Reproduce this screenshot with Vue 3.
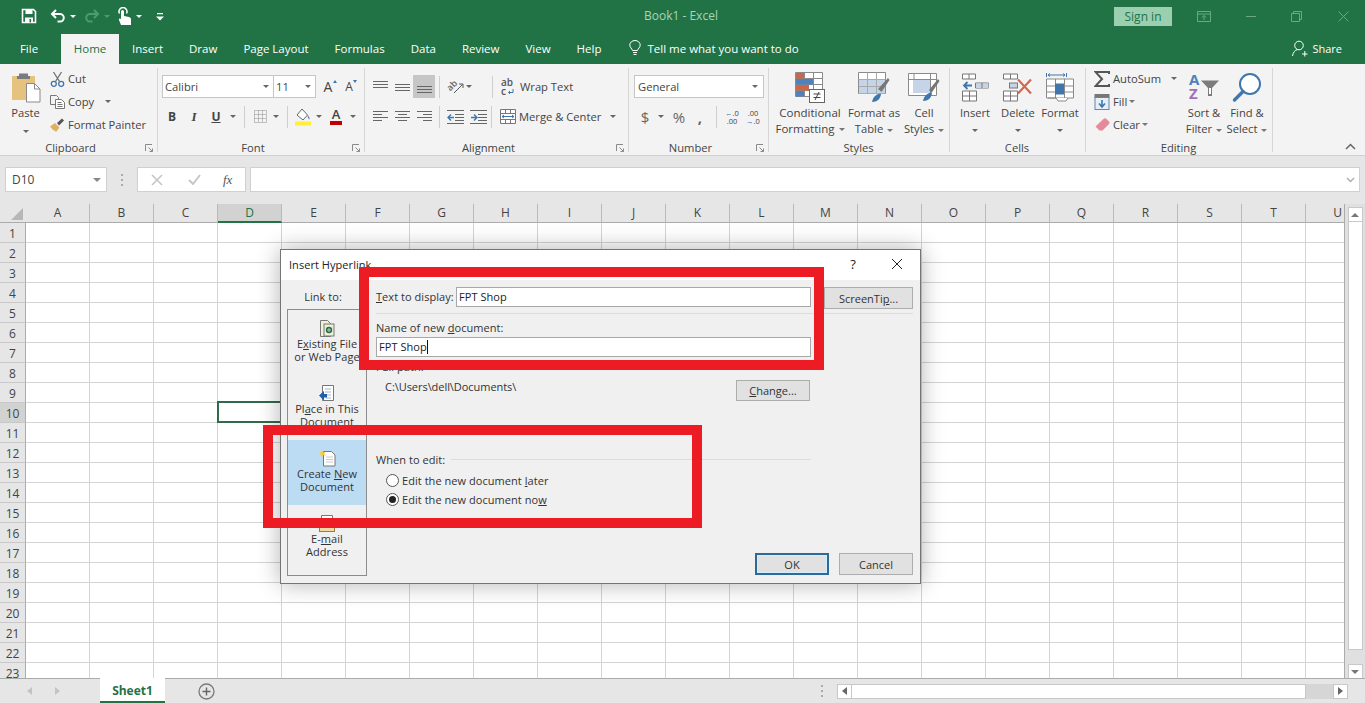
<script setup>
const tabs = ['Insert', 'Draw', 'Page Layout', 'Formulas', 'Data', 'Review', 'View', 'Help']
const cols = 'ABCDEFGHIJKLMNOPQRSTU'.split('')
const rows = Array.from({ length: 23 }, (_, i) => i + 1)
</script>

<template>
  <div class="app">
    <header class="titlebar">
      <div class="qat">
        <svg class="q-save" width="16" height="16" viewBox="0 0 16 16"><path d="M1.500 1.500h11l2 2v11h-13z" fill="none" stroke="#fff" stroke-width="1.600"/><rect x="4.500" y="2" width="7" height="4" fill="#fff"/><rect x="4" y="9.500" width="8" height="5" fill="#fff"/><rect x="8.500" y="11" width="1.600" height="3.400" fill="#217346"/></svg>
        <svg class="q-undo" width="16" height="16" viewBox="0 0 16 16"><path d="M6 2 2 6l4 4M2.500 6H10a3.600 3.600 0 0 1 0 7.600H7.500" fill="none" stroke="#fff" stroke-width="2"/></svg>
        <span class="caret white"></span>
        <svg class="q-redo" width="16" height="16" viewBox="0 0 16 16"><path d="M10 2l4 4-4 4M13.500 6H6a3.600 3.600 0 0 0 0 7.600h2.500" fill="none" stroke="#4f9a70" stroke-width="2"/></svg>
        <span class="caret dim"></span>
        <svg class="q-touch" width="15" height="19" viewBox="0 0 15 19"><path d="M4 18l-2-5c-.5-1.500 1-2.200 2-1V4.500a1.500 1.500 0 0 1 3 0V9l5 1c1.500.4 2 1.200 2 2.500V18z" fill="#fff"/><path d="M2.500 6.500a4 4 0 1 1 7 0" fill="none" stroke="#fff" stroke-width="1.500"/></svg>
        <span class="caret white"></span>
        <svg class="q-more" width="8" height="9" viewBox="0 0 8 9"><path d="M1 1h6v1.200H1zM0 4.500h8L4 8.500z" fill="#fff"/></svg>
      </div>
      <div class="doc-title">Book1  -  Excel</div>
      <div class="signin">Sign in</div>
      <div class="win">
        <svg width="14" height="11" viewBox="0 0 14 11"><path d="M.5.5h13v10H.5zM.5 3h13M7 9V4.500M5 6.500l2-2 2 2" fill="none" stroke="#69a987"/></svg>
        <svg width="12" height="11" viewBox="0 0 12 11"><path d="M1 5.500h10" stroke="#69a987"/></svg>
        <svg width="11" height="11" viewBox="0 0 11 11"><path d="M.5 2.500h8v8h-8zM2.500 2.500v-2h8v8h-2" fill="none" stroke="#69a987"/></svg>
        <svg width="11" height="11" viewBox="0 0 11 11"><path d="M.5.500l10 10M10.500.500l-10 10" stroke="#69a987"/></svg>
      </div>
    </header>

    <nav class="tabbar">
      <span class="tab file">File</span>
      <span class="tab active">Home</span>
      <span v-for="t in tabs" :key="t" class="tab">{{ t }}</span>
      <span class="tell">
        <svg width="12" height="16" viewBox="0 0 12 16"><path d="M3.500 10.500C3 8.500.8 7.500.8 5A5.200 4.500 0 0 1 11.200 5c0 2.500-2.200 3.500-2.700 5.500zM4 12.500h4M4.500 14.500h3" fill="none" stroke="#fff"/></svg>
        Tell me what you want to do
      </span>
      <span class="share">
        <svg width="16" height="17" viewBox="0 0 16 17"><circle cx="7" cy="5.500" r="4.300" fill="none" stroke="#fff"/><path d="M.5 16c.5-3.500 2.500-6 5-6.500M10 14h5.500M12.800 11v5.500" fill="none" stroke="#fff"/></svg>
        Share
      </span>
    </nav>

    <section class="ribbon">
      <div class="group g-clip">
        <div class="body clip-body">
          <div class="paste">
            <svg width="30" height="32" viewBox="0 0 30 32"><rect x="1" y="4" width="23" height="24" fill="#e6c27f"/><path d="M8 4V1.500h9V4h2v3H6V4z" fill="#7b7b7b"/><path d="M15.500 11.500h8l5.500 5.500V30h-13.500z" fill="#fff" stroke="#8a8a8a"/><path d="M23.500 11.500V17H29" fill="none" stroke="#8a8a8a"/></svg>
            <span class="big-label">Paste</span>
            <span class="caret big-caret"></span>
          </div>
          <div class="stack">
            <div class="r"><svg class="si" width="15" height="16" viewBox="0 0 15 16"><path d="M3.500 1l6 9.500M11.500 1l-6 9.500" stroke="#777" stroke-width="1.400"/><circle cx="3.800" cy="12.800" r="2.500" fill="none" stroke="#3f77ad" stroke-width="1.300"/><circle cx="11.200" cy="12.800" r="2.500" fill="none" stroke="#3f77ad" stroke-width="1.300"/></svg><span>Cut</span></div>
            <div class="r"><svg class="si" width="15" height="14" viewBox="0 0 15 14"><path d="M.5.500h6l2 2v2M.5.500v9h4.500" fill="none" stroke="#777"/><path d="M5.500 4.500h6l3 3v6h-9zM7.500 7.500h4M7.500 9.500h5M7.500 11.500h5" fill="#fff" stroke="#777"/></svg><span>Copy</span><span class="caret copy-caret"></span></div>
            <div class="r"><svg class="si" width="15" height="14" viewBox="0 0 15 14"><path d="M0 8.500 5 5l4.500 4.500L6 14c-1-.8-.8-1.500-2-1.500s-2.500-2.500-4-4z" fill="#e0b060"/><path d="M7 5l5-4.500 2 2L9 7.500z" fill="#555"/></svg><span>Format Painter</span></div>
          </div>
        </div>
        <div class="label-row"><span class="glabel">Clipboard</span><svg class="launch" width="8" height="8" viewBox="0 0 8 8"><path d="M.5 7V.5H7M3.500 3.500l4 4M7.500 4.500v3h-3" fill="none" stroke="#8a8a8a"/></svg></div>
      </div>

      <div class="group g-font">
        <div class="body rows2">
          <div class="r">
            <div class="select font-name"><span>Calibri</span><span class="caret"></span></div>
            <div class="select font-size"><span>11</span><span class="caret"></span></div>
            <span class="c22 grow-a">A<i class="up"></i></span>
            <span class="c20 shrink-a">A<i class="down"></i></span>
          </div>
          <div class="r back1">
            <span class="c22 fb">B</span><span class="c22 fi">I</span><span class="c22 fu">U</span><span class="c12"><span class="caret"></span></span>
            <span class="sep ml5"></span>
            <span class="c20"><svg width="15" height="15" viewBox="0 0 15 15"><path d="M1.500 1.500h12v12h-12zM5.500 1.500v12M9.500 1.500v12M1.500 5.500h12M1.500 9.500h12" fill="none" stroke="#8d8d8d" stroke-dasharray="1 1"/></svg></span>
            <span class="c12"><span class="caret"></span></span>
            <span class="sep ml5"></span>
            <span class="c20"><svg width="18" height="18" viewBox="0 0 18 18"><path d="M8 1l5.500 6-4.500 5L3 7z" fill="#fff" stroke="#666"/><path d="M13.500 7c1.500 1.500 2.500 3 2 4.500-1-1-2-2.500-2-4.500z" fill="#3f77ad"/><rect x="1" y="13.500" width="16" height="4" fill="#ffef3b"/></svg></span>
            <span class="c12"><span class="caret"></span></span>
            <span class="c22"><span class="color-a">A</span></span>
            <span class="c12"><span class="caret"></span></span>
          </div>
        </div>
        <div class="label-row"><span class="glabel">Font</span><svg class="launch" width="8" height="8" viewBox="0 0 8 8"><path d="M.5 7V.5H7M3.500 3.500l4 4M7.500 4.500v3h-3" fill="none" stroke="#8a8a8a"/></svg></div>
      </div>

      <div class="group g-align">
        <div class="body rows2">
          <div class="r">
            <span class="c22"><svg width="15" height="14" viewBox="0 0 15 14"><path d="M0 1.500h15M0 4.500h15M0 7.500h15" stroke="#666"/></svg></span>
            <span class="c22"><svg width="15" height="14" viewBox="0 0 15 14"><path d="M0 4.500h15M0 7.500h15M0 10.500h15" stroke="#666"/></svg></span>
            <span class="c22 on"><svg width="15" height="14" viewBox="0 0 15 14"><path d="M0 6.500h15M0 9.500h15M0 12.500h15" stroke="#666"/></svg></span>
            <span class="sep ml4"></span>
            <span class="c20"><svg class="orient" width="17" height="15" viewBox="0 0 17 15"><text x="1" y="11" transform="rotate(-45 4 9)" class="tiny">ab</text><path d="M7 14 15.500 5.500M12 5h4v4" fill="none" stroke="#555"/></svg></span>
            <span class="c8"><span class="caret"></span></span>
            <span class="sep ml19"></span>
            <span class="wrap-ic"><span class="w1">ab</span><span class="w2">c<svg width="7" height="7" viewBox="0 0 7 7"><path d="M6 1v3.500H1.500M3 3 1.500 4.500 3 6" fill="none" stroke="#3f77ad"/></svg></span></span>
            <span class="txt2">Wrap Text</span>
          </div>
          <div class="r">
            <span class="c22"><svg width="15" height="13" viewBox="0 0 15 13"><path d="M0 1.500h15M0 4.500h9M0 7.500h15M0 10.500h9" stroke="#666"/></svg></span>
            <span class="c22"><svg width="15" height="13" viewBox="0 0 15 13"><path d="M0 1.500h15M3 4.500h9M0 7.500h15M3 10.500h9" stroke="#666"/></svg></span>
            <span class="c22"><svg width="15" height="13" viewBox="0 0 15 13"><path d="M0 1.500h15M6 4.500h9M0 7.500h15M6 10.500h9" stroke="#666"/></svg></span>
            <span class="sep ml4"></span>
            <span class="c20"><svg width="17" height="14" viewBox="0 0 17 14"><path d="M0 .500h17M8 4.500h9M8 7.500h9M8 10.500h9M0 13.500h17" stroke="#666"/><path d="M1 7.500h6M4 4.500l-3 3 3 3" fill="none" stroke="#3f77ad" stroke-width="1.400"/></svg></span>
            <span class="c22 ml2"><svg width="17" height="14" viewBox="0 0 17 14"><path d="M0 .500h17M8 4.500h9M8 7.500h9M8 10.500h9M0 13.500h17" stroke="#666"/><path d="M1 7.500h6M4 4.500l3 3-3 3" fill="none" stroke="#3f77ad" stroke-width="1.400"/></svg></span>
            <span class="sep ml2"></span>
            <svg class="merge-ic" width="16" height="15" viewBox="0 0 16 15"><path d="M.5.500h15v14H.5zM.5 4.500h15M.5 10.500h15M5.500.500v4M10.500.500v4M5.500 10.500v4M10.500 10.500v4" fill="#fff" stroke="#777"/><path d="M2 7.500h12M4 6 2 7.500 4 9M12 6l2 1.500L12 9" fill="none" stroke="#3f77ad"/></svg>
            <span class="txt2">Merge &amp; Center</span>
            <span class="caret merge-caret"></span>
          </div>
        </div>
        <div class="label-row"><span class="glabel">Alignment</span><svg class="launch" width="8" height="8" viewBox="0 0 8 8"><path d="M.5 7V.5H7M3.500 3.500l4 4M7.500 4.500v3h-3" fill="none" stroke="#8a8a8a"/></svg></div>
      </div>

      <div class="group g-num">
        <div class="body rows2">
          <div class="r"><div class="select num-sel"><span>General</span><span class="caret"></span></div></div>
          <div class="r">
            <span class="c22 num-sym">$</span><span class="c10"><span class="caret"></span></span>
            <span class="c26 num-sym">%</span><span class="c16 num-sym comma">,</span>
            <span class="sep ml8"></span>
            <span class="c20 dec"><i class="arr">&#8592;</i>.0<br>.00</span>
            <span class="c22 dec">.00<br><i class="arr">&#8594;</i>.0</span>
          </div>
        </div>
        <div class="label-row"><span class="glabel">Number</span><svg class="launch" width="8" height="8" viewBox="0 0 8 8"><path d="M.5 7V.5H7M3.500 3.500l4 4M7.500 4.500v3h-3" fill="none" stroke="#8a8a8a"/></svg></div>
      </div>

      <div class="group g-styles">
        <div class="body bigs">
          <div class="big w78">
            <svg class="bi" width="30" height="31" viewBox="0 0 30 31"><path d="M.5.500h27v24H.5zM9.500.5v24M18.500.5v24M.5 6.500h27M.5 12.500h27M.5 18.500h27" fill="#fff" stroke="#8a8a8a"/><rect x="1" y="1" width="8" height="5.500" fill="#c9674a"/><rect x="1" y="7" width="17" height="5.500" fill="#4f81bd"/><rect x="1" y="13" width="13" height="5.500" fill="#c9674a"/><rect x="1" y="19" width="8" height="5.500" fill="#4f81bd"/><rect x="14.500" y="17.500" width="15" height="13" fill="#fff" stroke="#666"/><path d="M18.500 22h7M18.500 25.500h7M24 20l-4 8" fill="none" stroke="#444"/></svg>
            <span class="ln">Conditional</span><span class="ln">Formatting<span class="caret in"></span></span>
          </div>
          <div class="big w50">
            <svg class="bi" width="32" height="31" viewBox="0 0 32 31"><path d="M.5.500h27v21H.5zM9.500.5v21M18.500.5v21M.5 7.500h27M.5 14.500h27" fill="#fff" stroke="#8a8a8a"/><rect x="1" y="8" width="26" height="13.500" fill="#c5d4e6"/><path d="M.5 7.500h27M.5 14.500h27M9.500.5v21M18.500.5v21" stroke="#a9a9a9"/><path d="M20 17 30 6l1.500 2-8 12z" fill="#777"/><path d="M14 30c1-5 5-9 9-8-.5 5-4 8-9 8z" fill="#3f77ad"/></svg>
            <span class="ln">Format as</span><span class="ln">Table<span class="caret in"></span></span>
          </div>
          <div class="big w50">
            <svg class="bi" width="32" height="29" viewBox="0 0 32 29"><path d="M.5.500h28v22H.5zM.5 6.500h28M6 .500v6M22.500.500v22" fill="#fff" stroke="#8a8a8a"/><rect x="5" y="7" width="17" height="13" fill="#c5d4e6"/><path d="M21 17 30 6l1.500 2-8 12z" fill="#777"/><path d="M15 28c1-5 5-9 9-8-.5 5-4 8-9 8z" fill="#3f77ad"/></svg>
            <span class="ln">Cell</span><span class="ln">Styles<span class="caret in"></span></span>
          </div>
        </div>
        <div class="label-row plain"><span class="glabel">Styles</span></div>
      </div>

      <div class="group g-cells">
        <div class="body bigs">
          <div class="big w44">
            <svg class="bi" width="28" height="28" viewBox="0 0 28 28"><path d="M1.500.500h13v5h-13zM8 .500v5M1.500 17.500h14v10h-14zM8.500 17.500v10M1.500 22.500h14M14.500 9.500h13v5h-13zM21 9.500v5" fill="#fff" stroke="#777"/><rect x="15" y="10" width="12.500" height="4.500" fill="#c5d4e6"/><path d="M21 9.500v5" stroke="#777"/><path d="M3 12h8M6.500 8.500 3 12l3.500 3.500" fill="none" stroke="#3f77ad" stroke-width="1.800"/></svg>
            <span class="ln">Insert</span><span class="caret low"></span>
          </div>
          <div class="big w42">
            <svg class="bi" width="30" height="28" viewBox="0 0 30 28"><path d="M.5.500h14v5H.5zM7.500.500v5M.5 17.500h14v10H.5zM7.500 17.500v10M.5 22.500h14" fill="#fff" stroke="#777"/><rect x="6.500" y="9.500" width="8" height="5" fill="#c5d4e6" stroke="#777"/><path d="M15 6l13 14M28 6 15 20" stroke="#d2694d" stroke-width="2.200"/></svg>
            <span class="ln">Delete</span><span class="caret low"></span>
          </div>
          <div class="big w42">
            <svg class="bi" width="28" height="30" viewBox="0 0 28 30"><path d="M.5 6.500h27v19H.5zM9.500 6.500v19M18.500 6.500v19M.5 13.500h27M.5 19.500h27" fill="#fff" stroke="#8a8a8a"/><rect x="9" y="11" width="9" height="11" fill="#3f77ad"/><path d="M.5.500v4M20.500.500v4M2 2.500h17M4 1 2 2.500 4 4M17 1l2 1.500L17 4" fill="none" stroke="#3f77ad"/><path d="M2 25.500h8l2 3h8l2-3" fill="#fff" stroke="#8a8a8a"/></svg>
            <span class="ln">Format</span><span class="caret low"></span>
          </div>
        </div>
        <div class="label-row plain"><span class="glabel">Cells</span></div>
      </div>

      <div class="group g-edit">
        <div class="body bigs">
          <div class="stack edit-stack">
            <div class="r"><svg class="sum" width="16" height="16" viewBox="0 0 16 16"><path d="M15 3V1H1.500L8 8l-6.500 7H15v-2" fill="none" stroke="#555" stroke-width="2"/></svg><span>AutoSum</span><span class="caret sum-caret"></span></div>
            <div class="r"><svg class="sum" width="15" height="16" viewBox="0 0 15 16"><rect x="0" y="0" width="15" height="4" fill="#777"/><rect x=".5" y="3.500" width="14" height="12" fill="#e6eef7" stroke="#5d87b4"/><path d="M7.500 6v7M4.500 9.500l3 3.500 3-3.500" fill="none" stroke="#3f77ad" stroke-width="1.600"/></svg><span>Fill</span><span class="caret in near"></span></div>
            <div class="r"><svg class="sum" width="15" height="13" viewBox="0 0 15 13"><path d="M5 12.500 1 8.500 9 1c1-1 2-1 3 0l2.500 2.500c.7.800.7 1.500 0 2.500L8 12.500z" fill="#e58a9a"/></svg><span>Clear</span><span class="caret in near"></span></div>
          </div>
          <div class="big w44">
            <div class="sort-ic">
              <span class="az"><span class="az-a">A</span><span class="az-z">Z</span></span>
              <svg width="18" height="17" viewBox="0 0 18 17"><path d="M0 .5h18l-7 7.500v8H7V8z" fill="#7c7c7c"/><path d="M8 8v6h2V8z" fill="#fff"/></svg>
            </div>
            <span class="ln">Sort &amp;</span><span class="ln">Filter<span class="caret in"></span></span>
          </div>
          <div class="big w42">
            <svg class="bi" width="30" height="31" viewBox="0 0 30 31"><circle cx="18" cy="12" r="10" fill="#fff" stroke="#3f77ad" stroke-width="2"/><path d="M11 19.500 2.500 28" stroke="#3f77ad" stroke-width="3.400" stroke-linecap="round"/></svg>
            <span class="ln">Find &amp;</span><span class="ln">Select<span class="caret in"></span></span>
          </div>
        </div>
        <div class="label-row plain"><span class="glabel">Editing</span></div>
      </div>

      <div class="ribbon-end">
        <svg width="11" height="7" viewBox="0 0 11 7"><path d="M1 6l4.500-4.500L10 6" fill="none" stroke="#666" stroke-width="1.500"/></svg>
      </div>
    </section>

    <section class="formula">
      <div class="namebox"><span>D10</span><span class="caret"></span></div>
      <div class="fdots"><i></i><i></i><i></i></div>
      <div class="fxbox">
        <svg width="12" height="12" viewBox="0 0 12 12"><path d="M1 1l10 10M11 1 1 11" stroke="#c4c4c4" stroke-width="1.500"/></svg>
        <svg width="13" height="11" viewBox="0 0 13 11"><path d="M1 6l4 4 7-9" fill="none" stroke="#c4c4c4" stroke-width="1.800"/></svg>
        <span class="fx">fx</span>
      </div>
      <div class="finput">
        <svg width="9" height="6" viewBox="0 0 9 6"><path d="M1 1l3.500 3.500L8 1" fill="none" stroke="#b0b0b0" stroke-width="1.500"/></svg>
      </div>
    </section>

    <section class="sheet">
      <div class="grid">
        <div class="grow head-row">
          <div class="corner"><i></i></div>
          <div v-for="c in cols" :key="c" class="chead" :class="{ sel: c === 'D' }">{{ c }}</div>
        </div>
        <div v-for="r in rows" :key="r" class="grow">
          <div class="rhead" :class="{ sel: r === 10 }">{{ r }}</div>
          <div v-for="c in cols" :key="c" class="cell" :class="{ current: r === 10 && c === 'D' }"></div>
        </div>
      </div>
      <div class="vscroll">
        <div class="sbtn"><i class="tri-up"></i></div>
        <div class="vthumb"></div>
        <div class="sbtn"><i class="tri-down"></i></div>
      </div>
    </section>

    <footer class="statusbar">
      <div class="nav"><i class="tri-left dim"></i><i class="tri-right dim"></i></div>
      <div class="sheet-tab">Sheet1</div>
      <svg class="plus" width="17" height="17" viewBox="0 0 17 17"><circle cx="8.500" cy="8.500" r="7.500" fill="none" stroke="#7a7a7a" stroke-width="1.300"/><path d="M8.500 4.500v8M4.500 8.500h8" stroke="#666" stroke-width="1.400"/></svg>
      <div class="sdots"><i></i><i></i><i></i></div>
      <div class="hscroll">
        <div class="hbtn"><i class="tri-left"></i></div>
        <div class="hthumb"></div>
        <div class="hbtn"><i class="tri-right"></i></div>
      </div>
    </footer>

    <div class="dialog">
      <div class="dlg-title">
        <span class="dlg-name">Insert Hyperlink</span>
        <span class="help">?</span>
        <svg class="close" width="12" height="12" viewBox="0 0 12 12"><path d="M1 1l10 10M11 1 1 11" stroke="#222"/></svg>
      </div>
      <div class="dlg-body">
        <div class="linkcol">
          <div class="linkto">Link to:</div>
          <div class="panel">
            <div class="pitem">
              <svg class="pi" width="16" height="17" viewBox="0 0 16 17"><path d="M1.500.500h7l3 3v13h-10z" fill="#f5efd7" stroke="#777"/><rect x="5" y="4" width="10" height="12" fill="#e9f0d6" stroke="#777"/><circle cx="10" cy="10" r="3.200" fill="#2d6a4f"/><path d="M8 10h4M10 8v4" stroke="#cfe2c4" stroke-width=".8"/></svg>
              <span>E<u>x</u>isting File</span><span>or Web Page</span>
            </div>
            <div class="pitem">
              <svg class="pi" width="16" height="17" viewBox="0 0 16 17"><path d="M3.500.500h11v15h-11z" fill="#fff" stroke="#777"/><path d="M6 4h6M6 7h6M7 10h5M7 13h5" stroke="#9bb5cf"/><path d="M0 10.500 5 6v3h3v3.500H5v3z" fill="#1f5fa8"/></svg>
              <span>Pl<u>a</u>ce in This</span><span>Document</span>
            </div>
            <div class="pitem current">
              <svg class="pi" width="17" height="17" viewBox="0 0 17 17"><path d="M4.500 1.500h8l3.500 3.500v11H4.500z" fill="#fff" stroke="#777"/><path d="M7 7h7M7 9.500h7M7 12h7" stroke="#c9c9c9"/><path d="M3.500 0l.8 2.500 2.500-.8-1.600 2 1.600 2-2.500-.8-.8 2.500-.8-2.500-2.500.8 1.600-2-1.600-2 2.500.8z" fill="#f2c94c"/></svg>
              <span>Create <u>N</u>ew</span><span>Document</span>
            </div>
            <div class="pitem">
              <svg class="pi" width="16" height="17" viewBox="0 0 16 17"><path d="M2.500.500h11v14h-11z" fill="#fff" stroke="#777"/><rect x=".5" y="9.500" width="15" height="7" fill="#f0d9a8" stroke="#a07c3c"/></svg>
              <span>E-<u>m</u>ail</span><span>Address</span>
            </div>
          </div>
        </div>
        <div class="formcol">
          <div class="display-row">
            <label class="lb"><u>T</u>ext to display:</label>
            <div class="input display-input">FPT Shop</div>
            <button class="btn tip">ScreenTi<u>p</u>...</button>
          </div>
          <div class="rule"></div>
          <div class="lb name-lb">Name of new <u>d</u>ocument:</div>
          <div class="input name-input">FPT Shop<i class="cursor"></i></div>
          <div class="lb full-lb">Full path:</div>
          <div class="path-row">
            <span class="path">C:\Users\dell\Documents\</span>
            <button class="btn change"><u>C</u>hange...</button>
          </div>
          <div class="when"><span class="lb">When to edit:</span><i></i></div>
          <div class="radios">
            <div class="radio"><i class="rd"></i><span>Edit the new document <u>l</u>ater</span></div>
            <div class="radio"><i class="rd checked"></i><span>Edit the new document no<u>w</u></span></div>
          </div>
          <div class="actions">
            <button class="btn act ok">OK</button>
            <button class="btn act">Cancel</button>
          </div>
        </div>
      </div>
    </div>

    <div class="mark mark-a"></div>
    <div class="mark mark-b"></div>
  </div>
</template>

<style>
html, body { margin: 0; padding: 0; overflow: hidden; }
</style>

<style scoped>
.app { position: relative; width: 1365px; height: 703px; overflow: hidden; display: flex; flex-direction: column; font-family: "Open Sans", "Noto Sans", sans-serif; font-size: 11.2px; color: #444; background: #fff; }
i { font-style: normal; display: block; }
svg { display: block; flex: none; }

.caret { display: inline-block; width: 0; height: 0; border-left: 3px solid transparent; border-right: 3px solid transparent; border-top: 3px solid #666; flex: none; }
.caret.white { border-top-color: #fff; }
.caret.dim { border-top-color: #4f9a70; }
.caret.in { margin-left: 4px; vertical-align: middle; border-top-color: #777; }
.caret.in.near { margin-left: 2px; }
.caret.low { margin-top: 8px; }

.titlebar { height: 32px; background: #217346; display: flex; align-items: center; flex: none; position: relative; }
.qat { display: flex; align-items: center; width: 1114px; padding-left: 21px; box-sizing: border-box; }
.q-undo { margin-left: 13px; }
.qat .caret { margin-left: 4px; }
.q-redo { margin-left: 8px; }
.q-touch { margin-left: 7px; }
.q-more { margin-left: 14px; }
.doc-title { position: absolute; left: 644px; top: 7px; font-size: 12px; color: #a6d5b9; white-space: pre; }
.signin { width: 58px; height: 19px; line-height: 19px; background: #9bcfb0; color: #217346; text-align: center; font-size: 12px; }
.win { display: flex; align-items: center; margin-left: 25px; gap: 0; }
.win svg:nth-child(2) { margin-left: 34px; }
.win svg:nth-child(3) { margin-left: 34px; }
.win svg:nth-child(4) { margin-left: 36px; }

.tabbar { height: 32px; background: #217346; display: flex; align-items: stretch; flex: none; color: #fff; font-size: 11.5px; position: relative; }
.tab { display: flex; align-items: center; justify-content: center; padding: 0 13px 2px; margin-top: 2px; white-space: nowrap; }
.tab.file { width: 61px; padding: 0 3px 2px 0; box-sizing: border-box; }
.tab.active { width: 58px; padding: 0 0 2px; background: #f3f3f3; color: #217346; }
.tell { display: flex; align-items: center; gap: 6px; margin-left: 15px; padding-bottom: 2px; margin-top: 2px; white-space: nowrap; }
.share { display: flex; align-items: center; gap: 4px; margin-left: auto; margin-right: 23px; padding-bottom: 2px; margin-top: 2px; font-size: 11px; }

.ribbon { height: 92px; flex: none; background: #f3f3f3; border-bottom: 1px solid #cfcfcf; box-sizing: border-box; display: flex; }
.group { display: flex; flex-direction: column; box-sizing: border-box; position: relative; flex: none; }
.group::after { content: ""; position: absolute; right: 0; top: 4px; bottom: 3px; width: 1px; background: #d6d6d6; }
.g-clip { width: 158px; }
.g-font { width: 207px; }
.g-align { width: 264px; }
.g-num { width: 140px; }
.g-styles { width: 181px; }
.g-cells { width: 136px; }
.g-edit { width: 187px; }
.ribbon-end { flex: 1; display: flex; justify-content: flex-end; align-items: flex-end; padding: 0 9px 5px 0; }
.body { height: 76px; box-sizing: border-box; flex: none; }
.label-row { display: flex; align-items: center; height: 15px; padding-right: 4px; }
.glabel { flex: 1; text-align: center; font-size: 11.2px; color: #444; line-height: 15px; padding-right: 4px; }
.label-row.plain { padding-right: 0; }
.plain .glabel { padding-right: 2px; }
.launch { margin: 1px 1px 0 0; width: 8px; }

.clip-body { display: flex; padding: 3px 0 0 3px; }
.paste { width: 45px; display: flex; flex-direction: column; align-items: center; padding-top: 5px; }
.big-label { margin-top: 1px; line-height: 16px; }
.big-caret { margin-top: 9px; }
.stack { display: flex; flex-direction: column; }
.r { height: 23px; display: flex; align-items: center; white-space: nowrap; flex: none; }
.si { margin: 0 3px 0 2px; width: 15px; }
.copy-caret { margin-left: 11px; }

.rows2 { padding: 11px 0 0 4px; display: flex; flex-direction: column; gap: 7px; }
.back1 { margin-left: -1px; }
.select { height: 23px; box-sizing: border-box; background: #fff; border: 1px solid #c6c6c6; display: flex; align-items: center; justify-content: space-between; padding: 0 4px 0 2px; }
.font-name { width: 112px; }
.font-size { width: 43px; margin-left: -1px; }
.c8, .c10, .c12, .c16, .c20, .c22, .c26 { display: flex; align-items: center; justify-content: center; height: 23px; flex: none; position: relative; }
.c8 { width: 8px; } .c10 { width: 10px; } .c12 { width: 12px; } .c16 { width: 16px; }
.c20 { width: 20px; } .c22 { width: 22px; } .c26 { width: 26px; }
.on { background: #c6c6c6; }
.grow-a { font-size: 14px; margin-left: 1px; }
.shrink-a { font-size: 12px; }
.grow-a .up, .shrink-a .down { position: absolute; width: 0; height: 0; border-left: 2.5px solid transparent; border-right: 2.5px solid transparent; top: 5px; right: 2px; }
.up { border-bottom: 3px solid #3f77ad; }
.down { border-top: 3px solid #3f77ad; }
.fb { font-weight: 700; font-size: 12px; }
.fi { font-style: italic; font-family: "Liberation Serif", serif; font-size: 13px; font-weight: 700; }
.fu { text-decoration: underline; font-weight: 700; font-size: 12px; }
.sep { width: 1px; height: 22px; background: #cfcfcf; flex: none; margin-right: 5px; }
.ml2 { margin-left: 2px; }
.ml4 { margin-left: 4px; }
.ml5 { margin-left: 5px; }
.ml8 { margin-left: 8px; }
.ml19 { margin-left: 19px; }
.color-a { display: block; font-size: 13px; line-height: 13px; border-bottom: 4px solid #c00000; padding: 0 2px; font-weight: 600; }
.orient { overflow: visible; }
.tiny { font-size: 9px; fill: #666; font-weight: 600; }
.wrap-ic { display: flex; flex-direction: column; width: 16px; margin-left: 3px; font-size: 10px; line-height: 9px; color: #555; font-weight: 600; flex: none; }
.w1, .w2 { display: flex; align-items: center; height: 9px; }
.w2 svg { margin-left: 1px; }
.merge-ic { margin-left: 3px; }
.txt2 { margin-left: 3px; }
.merge-caret { margin-left: 9px; }

.g-num .rows2 { padding-left: 5px; }
.num-sel { width: 130px; padding-right: 5px; padding-left: 3px; }
.num-sym { font-size: 15px; color: #666; }
.comma { font-weight: 700; }
.dec { font-size: 7.5px; line-height: 8px; text-align: center; display: block; padding-top: 4px; box-sizing: border-box; }
.arr { display: inline; color: #3f77ad; font-weight: 700; }

.bigs { display: flex; padding: 6px 0 0 2px; }
.big { display: flex; flex-direction: column; align-items: center; white-space: nowrap; flex: none; }
.bi { height: 35px; margin-bottom: 0; }
.ln { line-height: 16px; display: block; }
.w78 .ln { font-size: 11.5px; }
.w78 { width: 78px; } .w50 { width: 50px; } .w44 { width: 44px; } .w42 { width: 42px; }
.g-cells .bigs { padding-left: 3px; }
.g-edit .bigs { padding-left: 8px; padding-top: 0; }
.g-edit .big { padding-top: 6px; }
.edit-stack { width: 88px; padding-top: 3px; flex: none; }
.sum { margin-right: 3px; width: 16px; }
.sum-caret { margin-left: 10px; }
.sort-ic { display: flex; width: 30px; height: 35px; flex: none; }
.az { display: flex; flex-direction: column; width: 12px; font-size: 15px; line-height: 14px; font-weight: 700; flex: none; padding-top: 2px; }
.az-a { color: #4f81bd; }
.az-z { color: #a26fb5; }
.sort-ic svg { margin-top: 10px; }

.formula { height: 48px; flex: none; background: #e6e6e6; display: flex; padding: 11px 5px 12px 5px; box-sizing: border-box; font-size: 12px; }
.namebox { width: 102px; height: 25px; box-sizing: border-box; background: #fff; border: 1px solid #d0d0d0; display: flex; align-items: center; justify-content: space-between; padding: 0 5px 0 6px; }
.namebox .caret { border-left-width: 4px; border-right-width: 4px; border-top-width: 4px; border-top-color: #888; }
.fdots { width: 30px; display: flex; flex-direction: column; align-items: center; justify-content: center; gap: 3px; }
.fdots i, .sdots i { width: 2px; height: 2px; background: #aaa; }
.fxbox { width: 109px; height: 25px; box-sizing: border-box; background: #fff; border: 1px solid #d0d0d0; display: flex; align-items: center; gap: 25px; padding-left: 13px; }
.fx { font-family: "Liberation Serif", serif; font-style: italic; font-size: 13px; color: #555; margin-left: -3px; }
.finput { flex: 1; height: 25px; margin-left: 4px; box-sizing: border-box; background: #fff; border: 1px solid #d0d0d0; display: flex; align-items: center; justify-content: flex-end; padding-right: 4px; }

.sheet { flex: 1; min-height: 0; display: flex; overflow: hidden; background: #e6e6e6; }
.grid { width: 1345px; overflow: hidden; flex: none; border-right: 1px solid #ababab; box-sizing: border-box; background: #fff; }
.grow { display: flex; height: 20px; }
.head-row { height: 19px; background: #e6e6e6; }
.corner { width: 26px; flex: none; position: relative; border-bottom: 1px solid #ababab; box-sizing: border-box; }
.corner i { position: absolute; right: 3px; bottom: 2px; width: 0; height: 0; border-left: 12px solid transparent; border-bottom: 12px solid #b7b7b7; }
.chead { width: 64px; flex: none; box-sizing: border-box; text-align: center; border-right: 1px solid #b9b9b9; border-bottom: 1px solid #ababab; line-height: 18px; font-size: 12px; color: #444; }
.chead.sel { background: #d2d2d2; color: #217346; border-bottom: 2px solid #217346; }
.rhead { width: 26px; flex: none; box-sizing: border-box; background: #e6e6e6; border-right: 1px solid #ababab; border-bottom: 1px solid #c8c8c8; text-align: center; line-height: 21px; font-size: 12px; color: #444; }
.rhead.sel { background: #d2d2d2; color: #444; border-right: 1px solid #ababab; }
.cell { width: 64px; flex: none; box-sizing: border-box; border-right: 1px solid #d4d4d4; border-bottom: 1px solid #d4d4d4; position: relative; }
.cell.current::after { content: ""; position: absolute; left: -1px; top: -2px; right: -1px; bottom: -1px; border: 2px solid #2f6b4a; }

.vscroll { width: 20px; flex: none; display: flex; flex-direction: column; align-items: center; padding: 3px 0 2px; box-sizing: border-box; background: #e0e0e0; }
.sbtn { width: 15px; height: 15px; background: #fff; border: 1px solid #c8c8c8; box-sizing: border-box; display: flex; align-items: center; justify-content: center; flex: none; }
.vthumb { width: 15px; height: 428px; box-sizing: border-box; background: #fff; border: 1px solid #c8c8c8; border-top: 0; margin-bottom: 14px; flex: none; }
.tri-up { width: 0; height: 0; border-left: 4px solid transparent; border-right: 4px solid transparent; border-bottom: 4px solid #777; }
.tri-down { width: 0; height: 0; border-left: 4px solid transparent; border-right: 4px solid transparent; border-top: 4px solid #777; }
.tri-left { width: 0; height: 0; border-top: 4px solid transparent; border-bottom: 4px solid transparent; border-right: 5px solid #666; }
.tri-right { width: 0; height: 0; border-top: 4px solid transparent; border-bottom: 4px solid transparent; border-left: 5px solid #666; }

.statusbar { height: 25px; flex: none; background: #e6e6e6; border-top: 1px solid #ababab; box-sizing: border-box; display: flex; align-items: center; }
.nav { width: 100px; display: flex; gap: 23px; padding-left: 27px; box-sizing: border-box; flex: none; }
.nav .dim { border-right-color: #c3c3c3; border-left-color: #c3c3c3; }
.sheet-tab { width: 65px; height: 25px; margin-top: -1px; background: #fff; color: #217346; font-weight: 700; font-size: 12px; line-height: 25px; text-align: center; border-bottom: 2px solid #217346; box-sizing: border-box; flex: none; }
.plus { margin-left: 33px; }
.sdots { margin-left: 606px; display: flex; flex-direction: column; gap: 3px; width: 2px; flex: none; }
.hscroll { margin-left: 14px; width: 511px; height: 15px; display: flex; background: #d6d6d6; flex: none; }
.hbtn { width: 15px; height: 15px; background: #fff; border: 1px solid #c8c8c8; box-sizing: border-box; display: flex; align-items: center; justify-content: center; flex: none; }
.hthumb { width: 454px; background: #fff; border: 1px solid #c8c8c8; border-left: 0; box-sizing: border-box; margin-right: 27px; flex: none; }

.dialog { position: absolute; left: 280px; top: 249px; width: 641px; height: 335px; box-sizing: border-box; border: 1px solid #757575; background: #f0f0f0; box-shadow: 0 0 22px rgba(0, 0, 0, .3); display: flex; flex-direction: column; color: #333; font-size: 11px; letter-spacing: .05px; }
.dlg-title { height: 30px; background: #fff; display: flex; align-items: center; flex: none; padding-left: 8px; padding-bottom: 2px; box-sizing: border-box; }
.dlg-name { font-size: 11px; flex: 1; color: #222; }
.help { font-size: 13px; margin-right: 35px; color: #222; }
.close { margin-right: 17px; }
.dlg-body { flex: 1; display: flex; min-height: 0; }
.linkcol { width: 86px; flex: none; padding-left: 6px; box-sizing: border-box; }
.linkto { height: 29px; line-height: 34px; text-align: center; padding-right: 8px; }
.panel { width: 80px; height: 267px; box-sizing: border-box; border: 1px solid #8c8c8c; background: #f0f0f0; }
.pitem { height: 65px; display: flex; flex-direction: column; align-items: center; box-sizing: border-box; padding-top: 10px; line-height: 13px; white-space: nowrap; color: #333; }
.pitem.current { background: #bcdcf4; }
.pi { height: 17px; margin-bottom: 0; }
.formcol { flex: 1; min-width: 0; display: flex; flex-direction: column; padding: 7px 7px 8px 9px; box-sizing: border-box; }
.display-row { display: flex; height: 22px; flex: none; }
.lb { white-space: nowrap; }
.display-row .lb { width: 80px; line-height: 20px; flex: none; }
.input { height: 20px; box-sizing: border-box; background: #fff; border: 1px solid #a8a8a8; line-height: 18px; padding-left: 2px; flex: none; display: flex; align-items: center; color: #222; }
.display-input { width: 355px; }
.name-input { width: 435px; margin-top: 2px; }
.cursor { width: 1px; height: 14px; background: #111; }
.btn { font: inherit; color: #333; letter-spacing: 0; background: #e1e1e1; border: 1px solid #adadad; box-sizing: border-box; padding: 0; display: flex; align-items: center; justify-content: center; flex: none; }
.tip { width: 89px; height: 22px; margin-left: 13px; }
.rule { height: 1px; background: #dcdcdc; margin-top: 4px; flex: none; }
.name-lb { height: 14px; line-height: 14px; margin-top: 7px; flex: none; }
.full-lb { height: 14px; line-height: 14px; margin-top: 3px; flex: none; }
.path-row { display: flex; justify-content: space-between; align-items: flex-start; width: 434px; height: 21px; margin-top: 6px; padding-left: 9px; box-sizing: border-box; flex: none; }
.path { line-height: 14px; letter-spacing: -.05px; }
.change { width: 74px; height: 21px; }
.when { display: flex; align-items: center; width: 435px; height: 14px; margin-top: 51px; flex: none; }
.when i { flex: 1; height: 1px; background: #dcdcdc; margin-left: 6px; }
.radios { margin-top: 5px; padding-left: 10px; flex: none; }
.radio { display: flex; align-items: center; height: 19px; gap: 3px; white-space: nowrap; }
.rd { width: 13px; height: 13px; box-sizing: border-box; border-radius: 50%; background: #fff; border: 1px solid #555; position: relative; flex: none; }
.rd.checked::after { content: ""; position: absolute; inset: 2px; border-radius: 50%; background: #222; }
.actions { margin-top: auto; display: flex; justify-content: flex-end; gap: 10px; flex: none; }
.act { width: 74px; height: 22px; }
.ok { border: 2px solid #2b6b9a; box-shadow: inset 0 0 0 1px #d5ecfa; }

.mark { position: absolute; box-sizing: border-box; border: 10px solid #ed1c24; pointer-events: none; }
.mark-a { left: 359px; top: 267px; width: 465px; height: 103px; }
.mark-b { left: 263px; top: 425px; width: 439px; height: 103px; }
</style>
